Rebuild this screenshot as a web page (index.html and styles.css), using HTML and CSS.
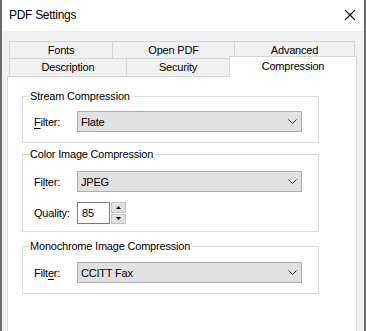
FILE: index.html
```html
<!DOCTYPE html>
<html>
<head>
    <title>PDF Settings</title>
    <link rel="stylesheet" href="styles.css">
</head>
<body>
    <div class="window">
        <div class="titlebar">
            <span class="title">PDF Settings</span>
            <svg class="close" width="12" height="12" viewBox="0 0 12 12">
                <path d="M1 1 L11 11 M11 1 L1 11" stroke="#000" stroke-width="1.1" fill="none"/>
            </svg>
        </div>
        <div class="client">
            <div class="tabs">
                <div class="tab-row back">
                    <div class="tab w-fonts">Fonts</div>
                    <div class="tab w-open">Open PDF</div>
                    <div class="tab w-adv last">Advanced</div>
                </div>
                <div class="tab-row front">
                    <div class="tab w-desc">Description</div>
                    <div class="tab w-sec">Security</div>
                    <div class="tab w-comp selected">Compression</div>
                </div>
            </div>
            <div class="page">
                <fieldset class="group stream">
                    <legend>Stream Compression</legend>
                    <div class="row">
                        <span class="label"><u>F</u>ilter:</span>
                        <div class="combo"><span>Flate</span><svg width="9" height="5" viewBox="0 0 9 5"><path d="M0.5 0.5 L4.5 4.5 L8.5 0.5" stroke="#333" fill="none"/></svg></div>
                    </div>
                </fieldset>
                <fieldset class="group color">
                    <legend>Color Image Compression</legend>
                    <div class="row">
                        <span class="label">Fi<u>l</u>ter:</span>
                        <div class="combo"><span>JPEG</span><svg width="9" height="5" viewBox="0 0 9 5"><path d="M0.5 0.5 L4.5 4.5 L8.5 0.5" stroke="#333" fill="none"/></svg></div>
                    </div>
                    <div class="row quality">
                        <span class="label">Quality:</span>
                        <div class="spin-edit">85</div>
                        <div class="spinner">
                            <div class="spin-btn"><svg width="5" height="3" viewBox="0 0 5 3"><path d="M2.5 0 L5 3 L0 3 Z" fill="#000"/></svg></div>
                            <div class="spin-btn"><svg width="5" height="3" viewBox="0 0 5 3"><path d="M0 0 L5 0 L2.5 3 Z" fill="#000"/></svg></div>
                        </div>
                    </div>
                </fieldset>
                <fieldset class="group mono">
                    <legend>Monochrome Image Compression</legend>
                    <div class="row">
                        <span class="label">Filt<u>e</u>r:</span>
                        <div class="combo"><span>CCITT Fax</span><svg width="9" height="5" viewBox="0 0 9 5"><path d="M0.5 0.5 L4.5 4.5 L8.5 0.5" stroke="#333" fill="none"/></svg></div>
                    </div>
                </fieldset>
            </div>
        </div>
    </div>
</body>
</html>
```

FILE: styles.css
```css
* {
    box-sizing: border-box;
    font-family: "Liberation Sans", Arial, sans-serif;
}
body {
    margin: 0;
    width: 366px;
    height: 331px;
    overflow: hidden;
    background-color: #fff;
    color: #000;
    font-size: 11px;
    letter-spacing: -0.2px;
}
.window {
    height: 345px;
    border-left: 2px solid #6b6b6b;
    border-right: 2px solid #6b6b6b;
    display: flex;
    flex-direction: column;
}
.titlebar {
    height: 31px;
    background-color: #fff;
    display: flex;
    align-items: center;
    justify-content: space-between;
    padding: 0 8px 0 7px;
}
.title {
    font-size: 12px;
    letter-spacing: -0.3px;
    line-height: 31px;
}
.close {
    display: block;
    margin-top: -1px;
}
.client {
    flex: 1;
    background-color: #f0f0f0;
    padding: 10px 7px 0 5px;
    display: flex;
    flex-direction: column;
}
.tabs {
    padding-left: 2px;
}
.tab-row {
    display: flex;
}
.tab {
    border: 1px solid #d9d9d9;
    border-right: none;
    border-bottom: none;
    background-color: #f0f0f0;
    text-align: center;
    white-space: nowrap;
}
.tab.last {
    border-right: 1px solid #d9d9d9;
}
.back .tab {
    height: 17px;
    line-height: 16px;
}
.front {
    height: 18px;
    align-items: flex-end;
}
.front .tab {
    height: 18px;
    line-height: 17px;
}
.front .tab.selected {
    height: 21px;
    line-height: 18px;
    margin-bottom: -1px;
    background-color: #fff;
    border-right: 1px solid #d9d9d9;
    position: relative;
    z-index: 2;
}
.w-fonts { width: 103px; }
.w-open { width: 122px; }
.w-adv { width: 121px; }
.w-desc { width: 117px; }
.w-sec { width: 103px; }
.w-comp { width: 128px; }

.page {
    flex: 1;
    background-color: #fff;
    border: 1px solid #d9d9d9;
    position: relative;
    z-index: 1;
    padding-left: 14px;
}
.group {
    margin: 0;
    width: 297px;
    min-inline-size: 0;
    border: 1px solid #dcdcdc;
    padding: 0;
}
.group legend {
    padding: 0 2px 0 1px;
    margin-left: 6px;
    line-height: 14px;
}
.stream {
    margin-top: 12px;
    padding-top: 8px;
    padding-bottom: 10px;
}
.color {
    margin-top: 4px;
    padding-top: 10px;
    padding-bottom: 7px;
}
.mono {
    margin-top: 7px;
    padding-top: 9px;
    padding-bottom: 10px;
}
.row {
    display: flex;
    align-items: center;
    padding-left: 11px;
}
.label {
    width: 43px;
    flex-shrink: 0;
}
.label u {
    text-decoration-thickness: 1px;
    text-underline-offset: 2px;
}
.combo {
    width: 225px;
    height: 21px;
    background-color: #e1e1e1;
    border: 1px solid #adadad;
    display: flex;
    align-items: center;
    justify-content: space-between;
    padding: 0 4px 0 3px;
}
.combo svg {
    display: block;
}
.quality {
    margin-top: 10px;
}
.spin-edit {
    width: 33px;
    height: 22px;
    border: 1px solid #7a7a7a;
    background-color: #fff;
    line-height: 20px;
    padding-left: 4px;
}
.spinner {
    margin-left: 1px;
    height: 22px;
    display: flex;
    flex-direction: column;
    gap: 1px;
}
.spin-btn {
    width: 15px;
    height: 11px;
    flex: 1;
    background-color: #e1e1e1;
    border: 1px solid #c4c4c4;
    display: flex;
    align-items: center;
    justify-content: center;
}
.spin-btn svg {
    display: block;
}
```
